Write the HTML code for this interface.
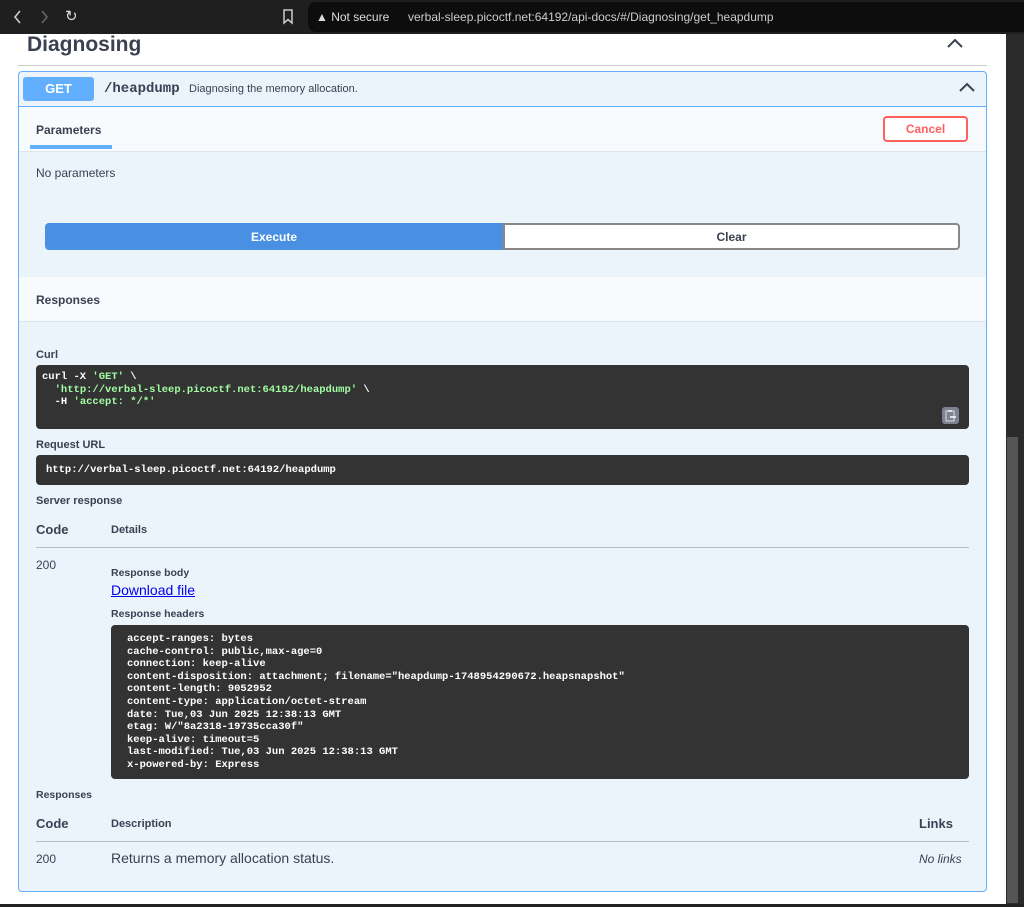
<!DOCTYPE html><html><head><style>
*{box-sizing:border-box;margin:0;padding:0}
body{width:1024px;height:907px;overflow:hidden;background:#fff;font-family:"Liberation Sans",sans-serif;color:#3b4151;position:relative}
.a{position:absolute}
.mono{font-family:"Liberation Mono",monospace;font-weight:bold}
.lbl{font-size:11px;font-weight:bold;color:#3b4151}
.code{background:#333;border-radius:4px;color:#fff;font-size:10.5px;line-height:12.6px}
</style></head><body>
<div class="a" style="left:0;top:0;width:1024px;height:34px;background:#1f1f1f"></div>
<div class="a" style="left:308px;top:2px;width:716px;height:30px;background:#0d0d0d;border-radius:8px 0 0 8px"></div>
<svg class="a" style="left:12px;top:10px" width="12" height="14"><path d="M8 1 L3 7 L8 13" stroke="#ccc" stroke-width="1.6" fill="none"/></svg>
<svg class="a" style="left:38px;top:10px" width="12" height="14"><path d="M4 1 L9 7 L4 13" stroke="#666" stroke-width="1.6" fill="none"/></svg>
<div class="a" style="left:65px;top:7px;color:#ddd;font-size:15px">&#8635;</div>
<svg class="a" style="left:282px;top:9px" width="12" height="16"><path d="M2 1 H10 V14 L6 10.5 L2 14 Z" stroke="#ccc" stroke-width="1.5" fill="none"/></svg>
<div class="a" style="left:316px;top:10px;color:#ddd;font-size:12px">&#9650; Not secure</div>
<div class="a" style="left:408px;top:10px;color:#ccc;font-size:12px">verbal-sleep.picoctf.net:64192/api-docs/#/Diagnosing/get_heapdump</div>
<div class="a" style="left:1006px;top:34px;width:18px;height:873px;background:#2b2b2b"></div>
<div class="a" style="left:1007px;top:437px;width:11px;height:466px;background:#555"></div>
<div class="a" style="left:0;top:904px;width:1024px;height:3px;background:#222"></div>

<div class="a" style="left:27px;top:33px;font-size:21px;font-weight:bold">Diagnosing</div>
<svg class="a" style="left:946px;top:37px" width="18" height="12"><path d="M2 10 L9 3 L16 10" stroke="#3b4151" stroke-width="2" fill="none"/></svg>
<div class="a" style="left:18px;top:65px;width:969px;height:1px;background:#ccc"></div>

<div class="a" style="left:18px;top:71px;width:969px;height:821px;border:1px solid #61affe;border-radius:4px;background:#ebf3fb"></div>
<div class="a" style="left:19px;top:106px;width:967px;height:1px;background:#61affe"></div>
<div class="a" style="left:23px;top:77px;width:71px;height:24px;background:#61affe;border-radius:3px;color:#fff;font-size:13px;font-weight:bold;text-align:center;line-height:24px">GET</div>
<div class="a mono" style="left:104px;top:81px;font-size:14px;color:#3b4151">/heapdump</div>
<div class="a" style="left:189px;top:83px;font-size:11px">Diagnosing the memory allocation.</div>
<svg class="a" style="left:958px;top:81px" width="18" height="12"><path d="M2 10 L9 3 L16 10" stroke="#3b4151" stroke-width="2" fill="none"/></svg>

<div class="a" style="left:19px;top:107px;width:967px;height:45px;background:#f8fbfd;border-bottom:1px solid #dde6ee"></div>
<div class="a" style="left:36px;top:123px;font-size:12px;font-weight:bold">Parameters</div>
<div class="a" style="left:30px;top:145px;width:82px;height:4px;background:#61affe"></div>
<div class="a" style="left:883px;top:116px;width:85px;height:26px;border:2px solid #ff6060;border-radius:4px;color:#ff6060;font-size:12px;font-weight:bold;text-align:center;line-height:22px;background:#fff">Cancel</div>
<div class="a" style="left:36px;top:166px;font-size:12px">No parameters</div>
<div class="a" style="left:45px;top:223px;width:458px;height:27px;background:#4990e2;border-radius:4px 0 0 4px;color:#fff;font-size:12px;font-weight:bold;text-align:center;line-height:28px">Execute</div>
<div class="a" style="left:503px;top:223px;width:457px;height:27px;border:2px solid #888;border-radius:0 4px 4px 0;background:#fff;font-size:12px;font-weight:bold;text-align:center;line-height:24px">Clear</div>

<div class="a" style="left:19px;top:277px;width:967px;height:45px;background:#f8fbfd;border-bottom:1px solid #dde6ee"></div>
<div class="a" style="left:36px;top:293px;font-size:12px;font-weight:bold">Responses</div>

<div class="a lbl" style="left:36px;top:349px">Curl</div>
<div class="a code mono" style="left:36px;top:365px;width:933px;height:64px;padding:6px 6px"><div>curl -X <span style="color:#a2fca2">'GET'</span> \</div><div>&nbsp;&nbsp;<span style="color:#a2fca2">'http://verbal-sleep.picoctf.net:64192/heapdump'</span> \</div><div>&nbsp;&nbsp;-H <span style="color:#a2fca2">'accept: */*'</span></div></div>
<div class="a" style="left:942px;top:407px;width:17px;height:17px;background:#7d8293;border-radius:3px"></div>
<svg class="a" style="left:944px;top:409px" width="13" height="13"><rect x="2" y="2" width="8" height="10" fill="none" stroke="#ddd" stroke-width="1"/><rect x="4" y="1" width="4" height="2" fill="#ddd"/><path d="M6 8 H12" stroke="#fff" stroke-width="1.5"/></svg>
<div class="a lbl" style="left:36px;top:439px">Request URL</div>
<div class="a code mono" style="left:36px;top:455px;width:933px;height:30px;padding:9px 10px">http://verbal-sleep.picoctf.net:64192/heapdump</div>
<div class="a lbl" style="left:36px;top:495px">Server response</div>
<div class="a" style="left:36px;top:522px;font-size:13px;font-weight:bold">Code</div>
<div class="a lbl" style="left:111px;top:524px">Details</div>
<div class="a" style="left:36px;top:547px;width:933px;height:1px;background:#b7bcc5"></div>
<div class="a" style="left:36px;top:558px;font-size:12px">200</div>
<div class="a lbl" style="left:111px;top:567px;font-size:10.5px">Response body</div>
<div class="a" style="left:111px;top:582px;font-size:14px;color:#00e;text-decoration:underline">Download file</div>
<div class="a lbl" style="left:111px;top:608px;font-size:10.5px">Response headers</div>
<div class="a code mono" style="left:111px;top:625px;width:858px;height:154px;padding:8px 16px"><div>accept-ranges: bytes</div><div>cache-control: public,max-age=0</div><div>connection: keep-alive</div><div>content-disposition: attachment; filename="heapdump-1748954290672.heapsnapshot"</div><div>content-length: 9052952</div><div>content-type: application/octet-stream</div><div>date: Tue,03 Jun 2025 12:38:13 GMT</div><div>etag: W/"8a2318-19735cca30f"</div><div>keep-alive: timeout=5</div><div>last-modified: Tue,03 Jun 2025 12:38:13 GMT</div><div>x-powered-by: Express</div></div>
<div class="a lbl" style="left:36px;top:789px;font-size:10.5px">Responses</div>
<div class="a" style="left:36px;top:816px;font-size:13px;font-weight:bold">Code</div>
<div class="a lbl" style="left:111px;top:818px">Description</div>
<div class="a" style="left:919px;top:816px;font-size:13px;font-weight:bold">Links</div>
<div class="a" style="left:36px;top:841px;width:933px;height:1px;background:#b7bcc5"></div>
<div class="a" style="left:36px;top:852px;font-size:12px">200</div>
<div class="a" style="left:111px;top:850px;font-size:14px">Returns a memory allocation status.</div>
<div class="a" style="left:919px;top:852px;font-size:12px;font-style:italic">No links</div>
</body></html>
